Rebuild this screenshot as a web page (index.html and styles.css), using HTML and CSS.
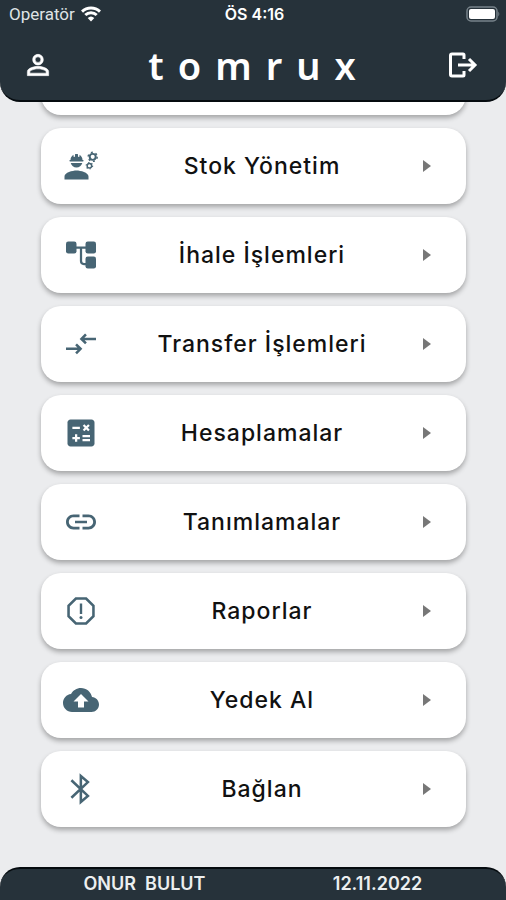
FILE: index.html
```html
<!DOCTYPE html>
<html lang="tr">
<head>
<meta charset="utf-8">
<meta name="viewport" content="width=device-width, initial-scale=1">
<title>tomrux</title>
<link rel="stylesheet" href="styles.css">
</head>
<body>
<div class="app">
  <header class="header">
    <div class="status">
      <div class="carrier">
        <span>Operatör</span>
        <svg width="20" height="16" viewBox="0 0 20 16" fill="none" stroke="#fff" stroke-width="3"><path d="M1 5.600a13 13 0 0 1 18 0M4.300 9a8.200 8.200 0 0 1 11.400 0"/><path d="M10 15.500 6.700 12a4.800 4.800 0 0 1 6.600 0z" fill="#fff" stroke="none"/></svg>
      </div>
      <span class="time">ÖS 4:16</span>
      <div class="battery">
        <svg width="34" height="16" viewBox="0 0 34 16"><rect x="1" y="1" width="30" height="14" rx="4" fill="none" stroke="#77838a" stroke-width="1.500"/><rect x="3" y="3" width="26" height="10" rx="2" fill="#fff"/><path d="M32.300 5.500q2 2.500 0 5z" fill="#77838a"/></svg>
      </div>
    </div>
    <div class="bar">
      <button class="icon-button" type="button" aria-label="Profil">
        <svg width="32" height="32" viewBox="0 0 24 24" fill="#fff" stroke="#fff" stroke-width=".4"><path d="M12 5.900a2.100 2.100 0 1 1 0 4.200 2.100 2.100 0 0 1 0-4.200m0 9c2.970 0 6.100 1.460 6.100 2.100v1.100H5.900V17c0-.640 3.130-2.100 6.100-2.100M12 4C9.790 4 8 5.790 8 8s1.790 4 4 4 4-1.790 4-4-1.790-4-4-4zm0 9c-2.670 0-8 1.340-8 4v3h16v-3c0-2.660-5.330-4-8-4z"/></svg>
      </button>
      <h1 class="logo">tomrux</h1>
      <button class="icon-button" type="button" aria-label="Çıkış">
        <svg width="32" height="32" viewBox="0 0 32 32" fill="none" stroke="#fff" stroke-width="3"><path d="M18 10V6q0-1-1-1H6q-1.500 0-1.500 1.500v19q0 1.500 1.500 1.500h11q1 0 1-1v-4M12 16h17M23 10l6 6-6 6"/></svg>
      </button>
    </div>
  </header>

  <main class="content">
    <nav class="menu">
      <div class="card"></div>
      <a class="card" href="#stok">
        <svg class="icon" viewBox="0 0 24 24"><path d="M9 15c-2.670 0-8 1.340-8 4v2h16v-2c0-2.660-5.330-4-8-4zM4.740 9h8.520c.270 0 .490-.220.490-.490v-.020a.490.490 0 0 0-.490-.490H13c0-1.480-.810-2.750-2-3.450v.950c0 .280-.220.500-.500.500S10 5.780 10 5.500V4.140C9.680 4.060 9.350 4 9 4s-.680.060-1 .140V5.500c0 .280-.220.500-.500.500S7 5.780 7 5.500v-.950C5.810 5.250 5 6.520 5 8h-.260a.490.490 0 0 0-.490.490v.030c0 .260.220.480.490.480zM9 13c1.860 0 3.410-1.280 3.860-3H5.140c.450 1.720 2 3 3.860 3z"/><g fill="none" stroke="currentColor"><circle cx="19.800" cy="5.900" r="2" stroke-width="1.300"/><circle cx="19.800" cy="5.900" r="3" stroke-width="1" stroke-dasharray="1.300 1.842"/><circle cx="17.600" cy="11.800" r="1.500" stroke-width="1"/><circle cx="17.600" cy="11.800" r="2.200" stroke-width=".7" stroke-dasharray=".9 1.404"/></g></svg>
        <span class="label">Stok Yönetim</span><span class="arrow"></span>
      </a>
      <a class="card" href="#ihale">
        <svg class="icon" viewBox="0 0 24 24"><rect x="2" y="3" width="7" height="8" rx="1.500"/><rect x="15" y="3" width="7" height="8" rx="1.500"/><rect x="15" y="13" width="7" height="8" rx="1.500"/><path d="M8 7h8M12 7v9q0 2 2 2h2" fill="none" stroke="currentColor" stroke-width="1.500"/></svg>
        <span class="label">İhale İşlemleri</span><span class="arrow"></span>
      </a>
      <a class="card" href="#transfer">
        <svg class="icon" viewBox="0 0 24 24"><path d="M2 15.200h9M8.700 12.200l3 3-3 3M22 8.600h-9M15.300 5.600l-3 3 3 3" fill="none" stroke="currentColor" stroke-width="1.700"/></svg>
        <span class="label">Transfer İşlemleri</span><span class="arrow"></span>
      </a>
      <a class="card" href="#hesap">
        <svg class="icon" viewBox="0 0 24 24"><path d="M19 3H5c-1.100 0-2 .900-2 2v14c0 1.100.900 2 2 2h14c1.100 0 2-.900 2-2V5c0-1.100-.900-2-2-2z"/><path d="M6.250 8.500h5M13.700 6.700l3.600 3.600M17.300 6.700l-3.600 3.600M8.750 12.900v5M6.250 15.400h5M13 14.100h5M13 16.700h5" fill="none" stroke="#fff" stroke-width="1.500"/></svg>
        <span class="label">Hesaplamalar</span><span class="arrow"></span>
      </a>
      <a class="card" href="#tanim">
        <svg class="icon" viewBox="0 0 24 24"><path d="M3.900 12c0-1.710 1.390-3.100 3.100-3.100h4V7H7c-2.760 0-5 2.240-5 5s2.240 5 5 5h4v-1.900H7c-1.710 0-3.100-1.390-3.100-3.100zM8 12.800h8v-1.600H8v1.600zM17 7h-4v1.900h4c1.710 0 3.100 1.390 3.100 3.100s-1.390 3.100-3.100 3.100h-4V17h4c2.760 0 5-2.240 5-5s-2.240-5-5-5z"/></svg>
        <span class="label">Tanımlamalar</span><span class="arrow"></span>
      </a>
      <a class="card" href="#rapor">
        <svg class="icon" viewBox="0 0 24 24"><path d="M8.600 3.700h6.800l4.900 4.900v6.800l-4.900 4.900H8.600l-4.900-4.900V8.600z" fill="none" stroke="currentColor" stroke-width="1.700"/><path d="M11.200 7h1.600v7h-1.600z"/><circle cx="12" cy="16.300" r="1"/></svg>
        <span class="label">Raporlar</span><span class="arrow"></span>
      </a>
      <a class="card" href="#yedek">
        <svg class="icon" viewBox="0 0 24 24"><path d="M19.350 10.040C18.670 6.590 15.640 4 12 4 9.110 4 6.600 5.640 5.350 8.040 2.340 8.360 0 10.910 0 14c0 3.310 2.690 6 6 6h13c2.760 0 5-2.240 5-5 0-2.640-2.050-4.780-4.650-4.960zM14 13v4h-4v-4H7l5-5 5 5h-3z"/></svg>
        <span class="label">Yedek Al</span><span class="arrow"></span>
      </a>
      <a class="card" href="#baglan">
        <svg class="icon" viewBox="0 0 24 24"><path d="m5.600 6.200 11 10.400-4.700 4.100V3.300l4.700 4.100-11 10.400" fill="none" stroke="currentColor" stroke-width="1.700"/></svg>
        <span class="label">Bağlan</span><span class="arrow"></span>
      </a>
    </nav>
  </main>

  <footer class="footer">
    <span class="user">ONUR&nbsp; BULUT</span>
    <time class="date" datetime="2022-11-12">12.11.2022</time>
  </footer>
</div>
</body>
</html>
```

FILE: styles.css
```css
* { box-sizing: border-box; }

body {
  margin: 0;
  background: #ebecee;
  color: #111;
  font-family: Inter, "Liberation Sans", sans-serif;
}

.app {
  display: flex;
  flex-direction: column;
  height: 100vh;
}

.header {
  flex: none;
  padding-bottom: 8px;
  border-bottom: 2px solid #050b0f;
  border-radius: 0 0 20px 20px;
  background: #26323a;
  color: #fff;
}

.status {
  display: grid;
  grid-template-columns: 1fr auto 1fr;
  align-items: center;
  height: 28px;
  padding: 0 6px 0 9px;
  font-size: 16px;
}

.carrier {
  display: flex;
  align-items: center;
  gap: 6px;
  color: #dfe3e5;
  font-family: Roboto, sans-serif;
  font-size: 17px;
}

.time { font-weight: 600; }

.battery {
  display: flex;
  justify-content: flex-end;
}

.bar {
  display: flex;
  align-items: center;
  justify-content: space-between;
  height: 64px;
  padding: 10px 28px 0 22px;
}

.icon-button {
  display: flex;
  padding: 0;
  border: 0;
  background: none;
}

.logo {
  margin: 0;
  padding-left: 18px;
  font: 600 38px/56px "Noto Sans", sans-serif;
  letter-spacing: 14px;
}

.content {
  flex: 1;
  min-height: 0;
  display: flex;
  flex-direction: column;
  justify-content: flex-end;
  overflow: hidden;
  padding: 0 40px 40px 41px;
}

.menu {
  display: flex;
  flex-direction: column;
  gap: 13px;
}

.card {
  display: flex;
  align-items: center;
  height: 76px;
  padding: 0 35px 0 22px;
  border-radius: 20px;
  background: #fff;
  box-shadow: 0 3px 5px rgba(0, 0, 0, 0.3);
  color: inherit;
  text-decoration: none;
}

.icon {
  flex: none;
  width: 36px;
  height: 36px;
  color: #476574;
  fill: currentColor;
}

.label {
  flex: 1;
  padding-left: 2px;
  font-size: 23px;
  font-weight: 500;
  letter-spacing: 1px;
  text-align: center;
}

.arrow {
  border: solid transparent;
  border-width: 6px 0 6px 8px;
  border-left-color: #777;
}

.footer {
  flex: none;
  display: grid;
  grid-template-columns: 1fr 1fr;
  justify-items: center;
  height: 33px;
  padding: 0 12px 0 28px;
  border-top: 2px solid #050b0f;
  border-radius: 20px 20px 0 0;
  background: #26323a;
  color: #eceff0;
  font-size: 18px;
  font-weight: 600;
  line-height: 29px;
}
```
